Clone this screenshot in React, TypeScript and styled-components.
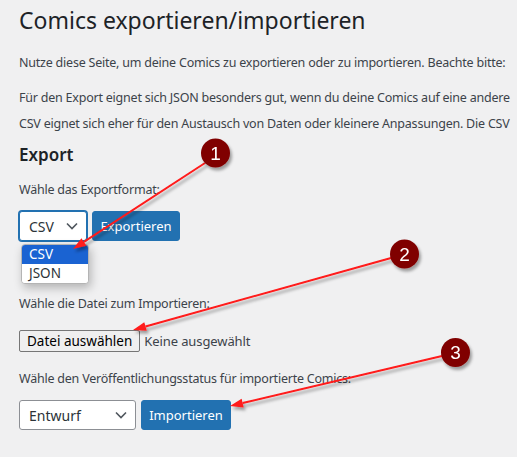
import React from "react";
import styled, { createGlobalStyle } from "styled-components";

const GlobalStyle = createGlobalStyle`
  html, body {
    margin: 0;
    padding: 0;
    background: #f0f0f1;
    overflow: hidden;
  }
  body {
    font-family: "Noto Sans", "Open Sans", sans-serif;
    color: #3c434a;
  }
`;

const Page = styled.div`
  position: relative;
  width: 517px;
  height: 457px;
  padding: 5px 0 0 19px;
  box-sizing: border-box;
  overflow: hidden;
  white-space: nowrap;
`;

const Title = styled.h1`
  margin: 0;
  font-size: 23px;
  font-weight: 400;
  line-height: 30px;
  color: #1d2327;
`;

const Text = styled.p<{ $top: number }>`
  margin: ${(p) => p.$top}px 0 0;
  font-size: 12.5px;
  letter-spacing: -0.22px;
  line-height: 20px;
`;

const SectionTitle = styled.h2`
  margin: 10px 0 0;
  font-size: 17px;
  font-weight: 600;
  line-height: 22px;
  color: #1d2327;
`;

const Row = styled.div<{ $top: number }>`
  position: relative;
  display: flex;
  align-items: center;
  gap: 5px;
  margin-top: ${(p) => p.$top}px;
`;

const Select = styled.div<{ $width: number; $focused?: boolean }>`
  position: relative;
  box-sizing: border-box;
  width: ${(p) => p.$width}px;
  height: 30px;
  display: flex;
  align-items: center;
  justify-content: space-between;
  padding: 0 8px 0 9px;
  background: #fff;
  border: 1px solid ${(p) => (p.$focused ? "#2271b1" : "#8c8f94")};
  box-shadow: ${(p) => (p.$focused ? "0 0 0 1px #2271b1" : "none")};
  border-radius: 3px;
  font-size: 14px;
  color: #2c3338;
`;

const Chevron = () => (
  <svg width="12" height="8" viewBox="0 0 12 8">
    <path d="M1 1.5 L6 6.5 L11 1.5" fill="none" stroke="#50575e" strokeWidth="1.6" />
  </svg>
);

const PrimaryButton = styled.button<{ $width: number }>`
  box-sizing: border-box;
  width: ${(p) => p.$width}px;
  height: 30px;
  padding: 0;
  background: #2271b1;
  border: 1px solid #2271b1;
  border-radius: 3px;
  color: #fff;
  font-family: inherit;
  font-size: 13px;
`;

const Menu = styled.ul`
  position: absolute;
  left: 1px;
  top: 32px;
  width: 66px;
  margin: 0;
  padding: 0;
  list-style: none;
  background: #fff;
  border: 1px solid #b4b4b4;
  border-radius: 4px;
  box-shadow: 2px 4px 10px rgba(0, 0, 0, 0.25);
  overflow: hidden;
  z-index: 2;
`;

const Option = styled.li<{ $active?: boolean }>`
  height: 19px;
  line-height: 19px;
  padding-left: 7px;
  font-size: 13.5px;
  background: ${(p) => (p.$active ? "#1a63d2" : "#fff")};
  color: ${(p) => (p.$active ? "#fff" : "#2c3338")};
`;

const FileButton = styled.button`
  box-sizing: border-box;
  height: 22px;
  padding: 0 7px;
  background: #efefef;
  border: 1px solid #767676;
  border-radius: 2px;
  font-family: inherit;
  font-size: 13.5px;
  color: #000;
`;

const FileName = styled.span`
  font-size: 13px;
  letter-spacing: -0.1px;
  color: #3c434a;
  margin-left: -1px;
`;

const Overlay = styled.svg`
  position: absolute;
  left: 0;
  top: 0;
  pointer-events: none;
  z-index: 5;
`;

type Marker = { n: number; cx: number; cy: number; x1: number; y1: number; x2: number; y2: number };

const markers: Marker[] = [
  { n: 1, cx: 215.5, cy: 153, x1: 205, y1: 163, x2: 73, y2: 249 },
  { n: 2, cx: 404.5, cy: 254, x1: 391, y1: 258, x2: 133, y2: 330 },
  { n: 3, cx: 455.5, cy: 352.5, x1: 442, y1: 356, x2: 230, y2: 406 },
];

const Arrow = ({ x1, y1, x2, y2 }: Marker) => {
  const a = Math.atan2(y2 - y1, x2 - x1);
  const len = 13;
  const w = 4.5;
  const bx = x2 - len * Math.cos(a);
  const by = y2 - len * Math.sin(a);
  const px = -Math.sin(a) * w;
  const py = Math.cos(a) * w;
  return (
    <g filter="url(#shadow)">
      <line x1={x1} y1={y1} x2={bx} y2={by} stroke="#ff1a1a" strokeWidth="2" />
      <polygon
        points={`${x2},${y2} ${bx + px},${by + py} ${bx - px},${by - py}`}
        fill="#ff1a1a"
      />
    </g>
  );
};

const Annotations = () => (
  <Overlay width="517" height="457" viewBox="0 0 517 457">
    <defs>
      <filter id="shadow" x="-10%" y="-10%" width="130%" height="140%">
        <feDropShadow dx="2" dy="3" stdDeviation="1.6" floodColor="#000" floodOpacity="0.35" />
      </filter>
    </defs>
    {markers.map((m) => (
      <Arrow key={"a" + m.n} {...m} />
    ))}
    {markers.map((m) => (
      <g key={"c" + m.n} filter="url(#shadow)">
        <circle cx={m.cx} cy={m.cy} r="14.5" fill="#800000" />
        <text
          x={m.cx}
          y={m.cy + 6.5}
          textAnchor="middle"
          fontFamily="'Liberation Sans', Arial, sans-serif"
          fontSize="19"
          fill="#fff"
        >
          {m.n}
        </text>
      </g>
    ))}
  </Overlay>
);

export default function App() {
  return (
    <>
      <GlobalStyle />
      <Page>
        <Title>Comics exportieren/importieren</Title>
        <Text $top={18}>
          Nutze diese Seite, um deine Comics zu exportieren oder zu importieren. Beachte bitte:
        </Text>
        <Text $top={15}>
          Für den Export eignet sich JSON besonders gut, wenn du deine Comics auf eine andere
        </Text>
        <Text $top={6}>
          CSV eignet sich eher für den Austausch von Daten oder kleinere Anpassungen. Die CSV
        </Text>
        <SectionTitle>Export</SectionTitle>
        <Text $top={14}>Wähle das Exportformat:</Text>
        <Row $top={11}>
          <Select $width={68} $focused>
            CSV
            <Chevron />
            <Menu>
              <Option $active>CSV</Option>
              <Option>JSON</Option>
            </Menu>
          </Select>
          <PrimaryButton $width={88}>Exportieren</PrimaryButton>
        </Row>
        <Text $top={53}>Wähle die Datei zum Importieren:</Text>
        <Row $top={16}>
          <FileButton>Datei auswählen</FileButton>
          <FileName>Keine ausgewählt</FileName>
        </Row>
        <Text $top={17}>Wähle den Veröffentlichungsstatus für importierte Comics:</Text>
        <Row $top={11}>
          <Select $width={117}>
            Entwurf
            <Chevron />
          </Select>
          <PrimaryButton $width={90}>Importieren</PrimaryButton>
        </Row>
        <Annotations />
      </Page>
    </>
  );
}
